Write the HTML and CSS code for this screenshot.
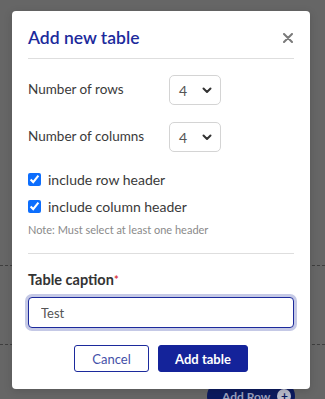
FILE: index.html
```html
<!DOCTYPE html>
<html lang="en">
<head>
  <meta charset="UTF-8" />
  <meta name="viewport" content="width=device-width, initial-scale=1.0"/>
  <title>Add new table</title>
  <link rel="stylesheet" href="styles.css">
</head>
<body>

  <!-- Pagina de fondo (atenuada) -->
  <div class="page">
    <div class="page-bar"></div>
    <div class="page-line first"></div>
    <div class="page-line second"></div>
    <div class="page-footer">
      <span class="add-btn"><span class="add-text">Add Row</span><span class="add-icon">+</span></span>
    </div>
  </div>

  <!-- Modal -->
  <div class="modal">
    <div class="modal-header">
      <h2>Add new table</h2>
      <button class="close-button" type="button" aria-label="Close">
        <svg width="10" height="10" viewBox="0 0 10 10">
          <path d="M1 1 L9 9 M9 1 L1 9" stroke="#7a7a7a" stroke-width="2" stroke-linecap="round"/>
        </svg>
      </button>
    </div>

    <div class="field-row">
      <label for="rows">Number of rows</label>
      <div class="select">
        <span>4</span>
        <svg width="10" height="7" viewBox="0 0 10 7">
          <path d="M1.5 1.5 L5 5 L8.5 1.5" stroke="#333" stroke-width="2" fill="none" stroke-linecap="round" stroke-linejoin="round"/>
        </svg>
      </div>
    </div>

    <div class="field-row">
      <label for="cols">Number of columns</label>
      <div class="select">
        <span>4</span>
        <svg width="10" height="7" viewBox="0 0 10 7">
          <path d="M1.5 1.5 L5 5 L8.5 1.5" stroke="#333" stroke-width="2" fill="none" stroke-linecap="round" stroke-linejoin="round"/>
        </svg>
      </div>
    </div>

    <div class="checks">
      <label class="check"><input type="checkbox" checked> include row header</label>
      <label class="check"><input type="checkbox" checked> include column header</label>
      <p class="note">Note: Must select at least one header</p>
    </div>

    <div class="caption">
      <label class="caption-label" for="caption">Table caption<span class="req">*</span></label>
      <input class="caption-input" id="caption" type="text" value="Test">
    </div>

    <div class="actions">
      <button class="cancel-button" type="button">Cancel</button>
      <button class="add-button" type="button">Add table</button>
    </div>
  </div>

</body>
</html>
```

FILE: styles.css
```css
body {
  margin: 0;
  font-family: 'Lato', 'Open Sans', sans-serif;
  background: #666666;
  height: 399px;
  overflow: hidden;
  position: relative;
}

/* fondo */
.page {
  display: flex;
  flex-direction: column;
  height: 399px;
}

.page-bar {
  margin-left: 61px;
  height: 7px;
  background: #5d5d5d;
}

.page-line {
  border-top: 1px dashed #3e3e3e;
}

.page-line.first {
  margin-top: 265px;
}

.page-line.second {
  margin-top: 78px;
}

.page-footer {
  display: flex;
  margin-top: 36px;
  padding-left: 207px;
}

.add-btn {
  display: flex;
  align-items: center;
  gap: 7px;
  flex-shrink: 0;
  width: 88px;
  height: 30px;
  padding: 0 0 0 15px;
  box-sizing: border-box;
  border-radius: 15px;
  background: #0c1a5e;
  color: #9aa0bd;
  font-size: 12px;
  font-weight: 700;
  white-space: nowrap;
}

.add-icon {
  width: 14px;
  height: 14px;
  flex-shrink: 0;
  border-radius: 50%;
  background: #b9bccb;
  color: #0c1a5e;
  font-size: 12px;
  line-height: 14px;
  text-align: center;
}

/* modal */
.modal {
  position: absolute;
  top: 11px;
  left: 12px;
  width: 298px;
  box-sizing: border-box;
  padding: 16px 16px 17px;
  background: #ffffff;
  border-radius: 4px;
  box-shadow: 0 2px 8px rgba(0, 0, 0, 0.15);
  color: #333;
}

.modal-header {
  display: flex;
  align-items: center;
  justify-content: space-between;
  padding-bottom: 9px;
  border-bottom: 1px solid #dedede;
  margin-bottom: 16px;
}

h2 {
  margin: 0;
  font-size: 17.5px;
  line-height: 22px;
  font-weight: 600;
  color: #1c2a9c;
}

.close-button {
  border: none;
  background: none;
  padding: 0;
  margin-right: 1px;
  width: 10px;
  height: 10px;
  display: flex;
  cursor: pointer;
}

.field-row {
  display: grid;
  grid-template-columns: 141px 52px;
  align-items: center;
  margin-bottom: 17px;
  font-size: 13.5px;
}

.field-row label {
  color: #3a3a3a;
  padding-bottom: 3px;
}

.select {
  height: 30px;
  box-sizing: border-box;
  border: 1px solid #d4d4d4;
  border-radius: 5px;
  display: flex;
  align-items: center;
  justify-content: space-between;
  padding: 0 8px 0 9px;
  font-size: 14px;
  color: #555;
}

.checks {
  padding-bottom: 16px;
  border-bottom: 1px solid #dedede;
}

.check {
  display: flex;
  align-items: center;
  gap: 7px;
  height: 20px;
  margin-bottom: 7px;
  font-size: 14px;
  color: #3a3a3a;
}

.check input {
  margin: 0;
  width: 13px;
  height: 13px;
  accent-color: #0d6efd;
}

.note {
  margin: 0;
  font-size: 11px;
  line-height: 14px;
  color: #8a8a8a;
}

.caption {
  padding-top: 16px;
}

.caption-label {
  display: block;
  font-size: 14.5px;
  font-weight: 700;
  line-height: 20px;
  color: #333;
  margin-bottom: 7px;
}

.req {
  color: #d9363e;
  font-size: 11px;
  vertical-align: top;
}

.caption-input {
  display: block;
  width: 100%;
  height: 31px;
  box-sizing: border-box;
  border: 1.5px solid #1c2a9c;
  border-radius: 4px;
  box-shadow: 0 0 0 3px #c5c9e6;
  padding: 0 12px;
  font-family: inherit;
  font-size: 13px;
  color: #555;
  outline: none;
}

.actions {
  display: flex;
  justify-content: center;
  gap: 9px;
  margin-top: 17px;
}

button {
  font-family: inherit;
  cursor: pointer;
}

.cancel-button,
.add-button {
  height: 27px;
  border-radius: 3px;
  font-size: 13px;
}

.cancel-button {
  width: 75px;
  background: #ffffff;
  border: 1px solid #1c2a9c;
  color: #4450a8;
}

.add-button {
  width: 90px;
  background: #14239a;
  border: 1px solid #14239a;
  color: #ffffff;
  font-weight: 700;
}
```
